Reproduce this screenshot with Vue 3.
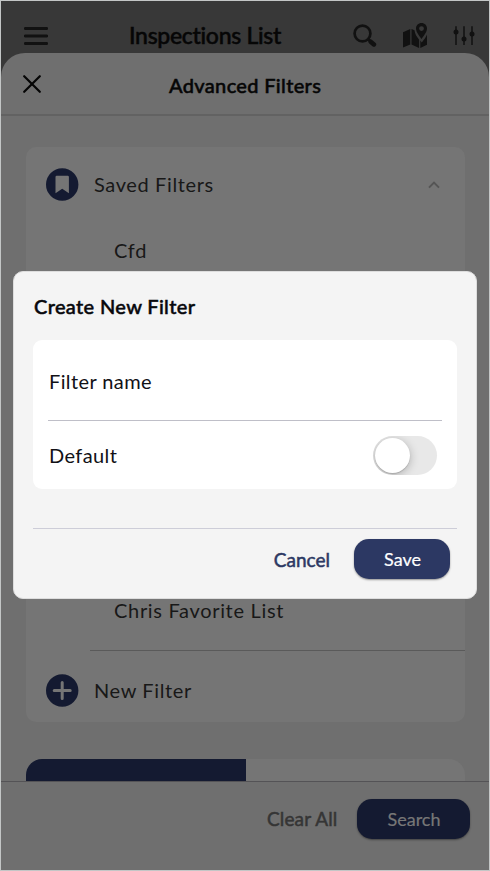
<script setup>
const saved = ['Cfd', 'Chris Favorite List']
</script>

<template>
  <div class="screen">
    <header class="topbar">
      <svg class="menu" width="24" height="20" viewBox="0 0 24 20"><path d="M1.3 2.5h21.4M1.3 10h21.4M1.3 17.5h21.4" /></svg>
      <h1>Inspections List</h1>
      <svg class="search" width="24" height="24" viewBox="0 0 24 24"><circle cx="9.5" cy="9.5" r="7.9" /><path class="neck" d="M15 15l3 3" /><path class="handle" d="M17.7 17.7l3.2 2.7" /></svg>
      <svg class="map" width="25" height="26" viewBox="0 0 25 26">
        <path d="M0 9.2L7.3 6v15.500L0 24.600zM8.500 6l3 1.200c.4 4.100 2.500 6.500 4.600 9.500V25l-7.600-3.500zM17.300 17.600l1.500 2c2.400-3 4.100-5.300 5.200-8v10.200L17.300 25z" />
        <path fill-rule="evenodd" d="M18.500 0C21.700 0 24 2.400 24 5.500c0 3.400-3.200 7.400-5.500 10.600C16.200 12.900 13 8.900 13 5.500 13 2.400 15.300 0 18.500 0zm0 3.200a2.400 2.400 0 100 4.800 2.400 2.400 0 000-4.800z" />
      </svg>
      <svg class="sliders" width="22" height="22" viewBox="0 0 22 22"><path d="M3 1.200v18.800M11 1.200v18.800M19 1.200v18.800" /><circle cx="3" cy="7" r="2.500" /><circle cx="11" cy="14" r="2.500" /><circle cx="19" cy="9" r="2.500" /></svg>
    </header>

    <section class="sheet">
      <div class="sheet-head">
        <svg class="close" width="18" height="18" viewBox="0 0 18 18"><path d="M1.200 1.200l15.600 15.600M16.800 1.200L1.200 16.800" /></svg>
        <h2>Advanced Filters</h2>
      </div>
      <div class="sheet-body">
        <div class="card">
          <div class="row head">
            <svg class="badge" width="33" height="33" viewBox="0 0 33 33"><circle cx="16.200" cy="16.500" r="16.200" /><path class="glyph" d="M10.700 7.800h11a1.200 1.200 0 011.200 1.200v16.200l-6.700-4.500-6.700 4.500V9a1.200 1.200 0 011.200-1.200z" /></svg>
            <span class="label">Saved Filters</span>
            <svg class="chevron" width="12" height="8" viewBox="0 0 12 8"><path d="M1 6.600l5-5 5 5" /></svg>
          </div>
          <div class="items">
            <div v-for="name in saved" :key="name" class="item">{{ name }}</div>
          </div>
          <div class="row new">
            <svg class="badge" width="33" height="33" viewBox="0 0 33 33"><circle cx="16.200" cy="16.500" r="16.200" /><path class="plus" d="M16.200 8.500v16M8.200 16.500h16" /></svg>
            <span class="label">New Filter</span>
          </div>
        </div>
        <div class="tabs"><div class="tab active"></div><div class="tab"></div></div>
      </div>
      <footer class="sheet-foot">
        <span class="clear">Clear All</span>
        <button class="btn dim">Search</button>
      </footer>
    </section>

    <div class="dialog">
      <h3>Create New Filter</h3>
      <div class="form">
        <div class="field"><span>Filter name</span></div>
        <div class="field last"><span>Default</span><div class="toggle"><div class="knob"></div></div></div>
      </div>
      <div class="actions">
        <span class="cancel">Cancel</span>
        <button class="btn">Save</button>
      </div>
    </div>
  </div>
</template>

<style>
body { margin: 0; background: #c3c6c6; }
</style>

<style scoped>
* { box-sizing: border-box; }
.screen { position: relative; width: 490px; height: 871px; padding: 1px; background: #c3c6c6; font-family: Lato, sans-serif; overflow: hidden; display: flex; flex-direction: column; }
svg { display: block; flex: none; fill: none; }
h1, h2, h3 { margin: 0; font-weight: 500; white-space: nowrap; }
.topbar { height: 76px; flex: none; margin-bottom: -24px; background: #383838; display: flex; align-items: flex-start; position: relative; }
.menu { margin: 25px 0 0 23px; stroke: #111; stroke-width: 2.800; stroke-linecap: round; }
h1 { margin: 19px 0 0 81px; width: 224px; font-size: 23px; line-height: 30px; color: #060606; letter-spacing: -0.3px; -webkit-text-stroke: .5px #060606; }
.search { margin-top: 23px; stroke: #111; stroke-width: 2.700; }
.search .handle { stroke-width: 4.600; stroke-linecap: round; }
.map { margin: 22px 0 0 26px; fill: #111; }
.sliders { margin: 24px 0 0 25px; stroke: #111; stroke-width: 1.500; }
.sliders circle { fill: #111; stroke: none; }
.sheet { position: relative; flex: 1; min-height: 0; background: #6f6f6f; border-radius: 24px 24px 0 0; overflow: hidden; display: flex; flex-direction: column; }
.sheet-head { height: 63px; flex: none; border-bottom: 2px solid #626262; display: flex; }
.close { margin: 22px 0 0 22px; stroke: #050505; stroke-width: 2.200; stroke-linecap: round; }
h2 { margin: 17px 0 0 128px; font-size: 20px; line-height: 30px; color: #060606; letter-spacing: .33px; -webkit-text-stroke: .5px #060606; }
.sheet-body { flex: 1; min-height: 0; padding: 31px 24px 0 25px; overflow: hidden; }
.card { height: 575px; background: #757575; border-radius: 10px; display: flex; flex-direction: column; }
.row { display: flex; align-items: center; flex: none; padding: 0 25px 0 20px; }
.head { height: 75px; }
.new { height: 71px; padding-top: 7px; }
.badge { fill: #141a31; margin-right: 15px; }
.badge .glyph { fill: #757575; }
.badge .plus { stroke: #757575; stroke-width: 3; stroke-linecap: round; }
.label, .item { font-size: 20px; line-height: 28px; letter-spacing: .68px; color: #181818; white-space: nowrap; }
.label { margin-top: -2px; letter-spacing: .62px; }
.new .label { margin-top: 0; }
.chevron { margin-left: auto; stroke: #555; stroke-width: 2; }
.items { margin-left: 64px; height: 429px; border-bottom: 1px solid #5a5a5a; padding: 14px 0 26px 24px; display: flex; flex-direction: column; justify-content: space-between; flex: none; }
.tabs { margin-top: 37px; height: 60px; display: flex; border-radius: 16px; overflow: hidden; background: #757575; }
.tab { width: 50%; }
.active { background: #141a31; }
.sheet-foot { height: 89px; flex: none; background: #6f6f6f; border-top: 1px solid #545356; display: flex; padding: 17px 19px 0; justify-content: flex-end; align-items: flex-start; }
.clear { font-size: 19px; line-height: 40px; color: #353535; -webkit-text-stroke: .5px #353535; letter-spacing: .15px; margin-right: 19.500px; }
.btn { width: 96px; height: 40px; border: 0; padding: 0 0 0 1px; border-radius: 15px; background: #2c3863; color: #fff; font: 400 18px/40px Lato, sans-serif; -webkit-text-stroke: .2px; box-shadow: 0 1px 2px rgba(0,0,0,.4); }
.btn.dim { width: 113px; background: #141a31; color: #777; }
.dialog { position: absolute; left: 13px; top: 271px; width: 464px; height: 328px; background: #f4f4f4; border: 1px solid #ddd; border-radius: 10px; padding: 19px 19px 0; }
h3 { font-size: 20px; line-height: 30px; color: #08080c; letter-spacing: .35px; margin-left: 1px; -webkit-text-stroke: .5px #08080c; }
.form { height: 149px; margin: 19px 0 0; border-radius: 9px; background: #fff; padding: 0 15px; color: #111116; font-size: 20px; letter-spacing: .4px; }
.field { height: 81px; padding: 2px 0 0 1px; display: flex; align-items: center; border-bottom: 1px solid #bfbfc8; }
.field.last { height: 68px; padding: 0 5px 0 1px; justify-content: space-between; border: 0; }
.toggle { width: 64px; height: 39px; border-radius: 20px; background: #e8e8e8; padding: 2px; overflow: hidden; }
.knob { width: 35px; height: 35px; border-radius: 50%; background: #fff; box-shadow: 0 1px 1px rgba(0,0,0,.15), 0 2px 10px rgba(0,0,0,.25); }
.actions { margin-top: 39px; border-top: 1px solid #cdcdd8; display: flex; justify-content: flex-end; padding: 10px 7px 0 0; }
.cancel { margin-right: 24px; font-size: 19px; line-height: 42px; color: #2c3863; -webkit-text-stroke: .5px #2c3863; }
</style>
